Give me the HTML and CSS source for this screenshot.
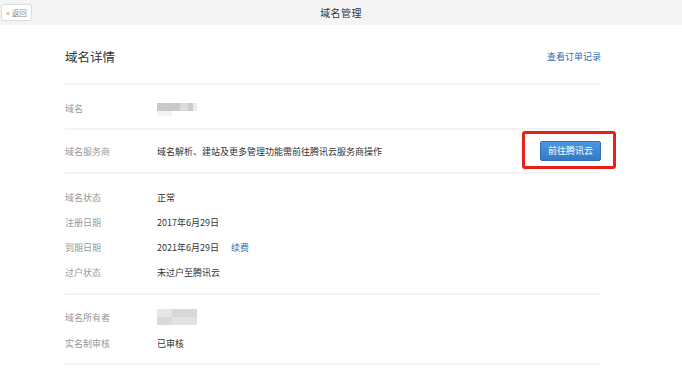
FILE: index.html
```html
<!DOCTYPE html>
<html lang="zh-CN">
<head>
<meta charset="utf-8">
<title>域名管理</title>
<link rel="stylesheet" href="styles.css">
</head>
<body>
<div class="topbar">
  <a class="back">« 返回</a>
  <div class="topbar-title">域名管理</div>
</div>
<div class="page">
  <div class="head">
    <h1 class="title">域名详情</h1>
    <a class="link">查看订单记录</a>
  </div>
  <div class="sec sec-a">
    <div class="row">
      <div class="label">域名</div>
      <div class="value"><span class="blur blur1"><i class="b1a"></i><i class="b1b"></i><i class="b1c"></i><i class="b1d"></i><i class="b1e"></i></span></div>
    </div>
  </div>
  <div class="sec sec-b">
    <div class="row">
      <div class="label">域名服务商</div>
      <div class="value">域名解析、建站及更多管理功能需前往腾讯云服务商操作</div>
      <div class="btn-wrap"><a class="btn">前往腾讯云</a><span class="mark"></span></div>
    </div>
  </div>
  <div class="sec sec-c">
    <div class="row r25"><div class="label">域名状态</div><div class="value">正常</div></div>
    <div class="row r25"><div class="label">注册日期</div><div class="value">2017年6月29日</div></div>
    <div class="row r25"><div class="label">到期日期</div><div class="value">2021年6月29日<a class="renew">续费</a></div></div>
    <div class="row r25"><div class="label">过户状态</div><div class="value">未过户至腾讯云</div></div>
  </div>
  <div class="sec sec-d">
    <div class="row r26"><div class="label">域名所有者</div><div class="value"><span class="blur blur2"><i class="b2a"></i><i class="b2b"></i><i class="b2c"></i><i class="b2d"></i></span></div></div>
    <div class="row r26"><div class="label">实名制审核</div><div class="value">已审核</div></div>
  </div>
</div>
</body>
</html>
```

FILE: styles.css
```css
* { box-sizing: border-box; }
html, body { margin: 0; padding: 0; background: #fff; }
body {
  width: 682px;
  height: 375px;
  overflow: hidden;
  font-family: "Noto Sans CJK SC", "Noto Sans", sans-serif;
  color: #333;
}
.topbar {
  height: 25px;
  background: #f4f4f4;
  position: relative;
  display: flex;
  align-items: center;
  justify-content: center;
}
.back {
  position: absolute;
  left: 1px;
  top: 4px;
  width: 31px;
  height: 17px;
  border: 1px solid #dcdcdc;
  border-radius: 2px;
  background: #fff;
  font-size: 7.5px;
  line-height: 15px;
  color: #888;
  text-align: center;
}
.topbar-title {
  font-size: 10px;
  letter-spacing: 0.4px;
  color: #333;
  line-height: 14px;
}
.page {
  margin-left: 65px;
  width: 536px;
}
.head {
  display: flex;
  justify-content: space-between;
  align-items: center;
  height: 60px;
  padding-top: 5px;
  border-bottom: 2px solid #f3f3f3;
}
.title {
  margin: 0;
  font-size: 12.5px;
  font-weight: normal;
  color: #333;
  line-height: 20px;
}
.link {
  font-size: 9px;
  color: #2f6db3;
  line-height: 20px;
}
.sec { border-bottom: 2px solid #f3f3f3; }
.sec-a { padding: 13px 0 10px; }
.sec-b { padding: 11px 0 11px; }
.sec-c { padding: 11px 0 8px; }
.sec-d { padding: 9px 0 7px; }
.row {
  display: flex;
  align-items: center;
  height: 20px;
  font-size: 9px;
}
.row.r25 { height: 25px; }
.row.r26 { height: 26px; }
.label {
  width: 92px;
  color: #999;
  flex: none;
}
.value {
  flex: 1;
  color: #333;
  display: flex;
  align-items: center;
}
.renew {
  margin-left: 12px;
  color: #2f6db3;
}
.blur { display: grid; }
.blur i { display: block; }
.blur1 {
  grid-template-columns: 23px 8px 5px 4px;
  grid-template-rows: 8px 5px;
  margin-top: 3px;
}
.b1a { background: #c9c9c9; }
.b1b { background: #dcdcdc; }
.b1c { background: #cbcbcb; }
.b1d { background: #ededed; }
.b1e { grid-column: 1 / 2; background: #f3f3f3; width: 15px; }
.blur2 {
  grid-template-columns: 15px 25px;
  grid-template-rows: 8px 8px;
}
.b2a { background: #e6e6e6; }
.b2b { background: #d8d8d8; }
.b2c { background: #d9d9d9; }
.b2d { background: #e2e2e2; }
.btn-wrap {
  position: relative;
  flex: none;
}
.btn {
  display: block;
  width: 61px;
  height: 20px;
  border: 1px solid #2f6fb3;
  border-radius: 2px;
  background: linear-gradient(#4b98df, #3479c4);
  color: #fff;
  font-size: 9px;
  line-height: 18px;
  text-align: center;
}
.mark {
  position: absolute;
  left: -18px;
  top: -10px;
  right: -15px;
  bottom: -8px;
  border: 3px solid #e8201a;
  border-radius: 3px;
}
```
